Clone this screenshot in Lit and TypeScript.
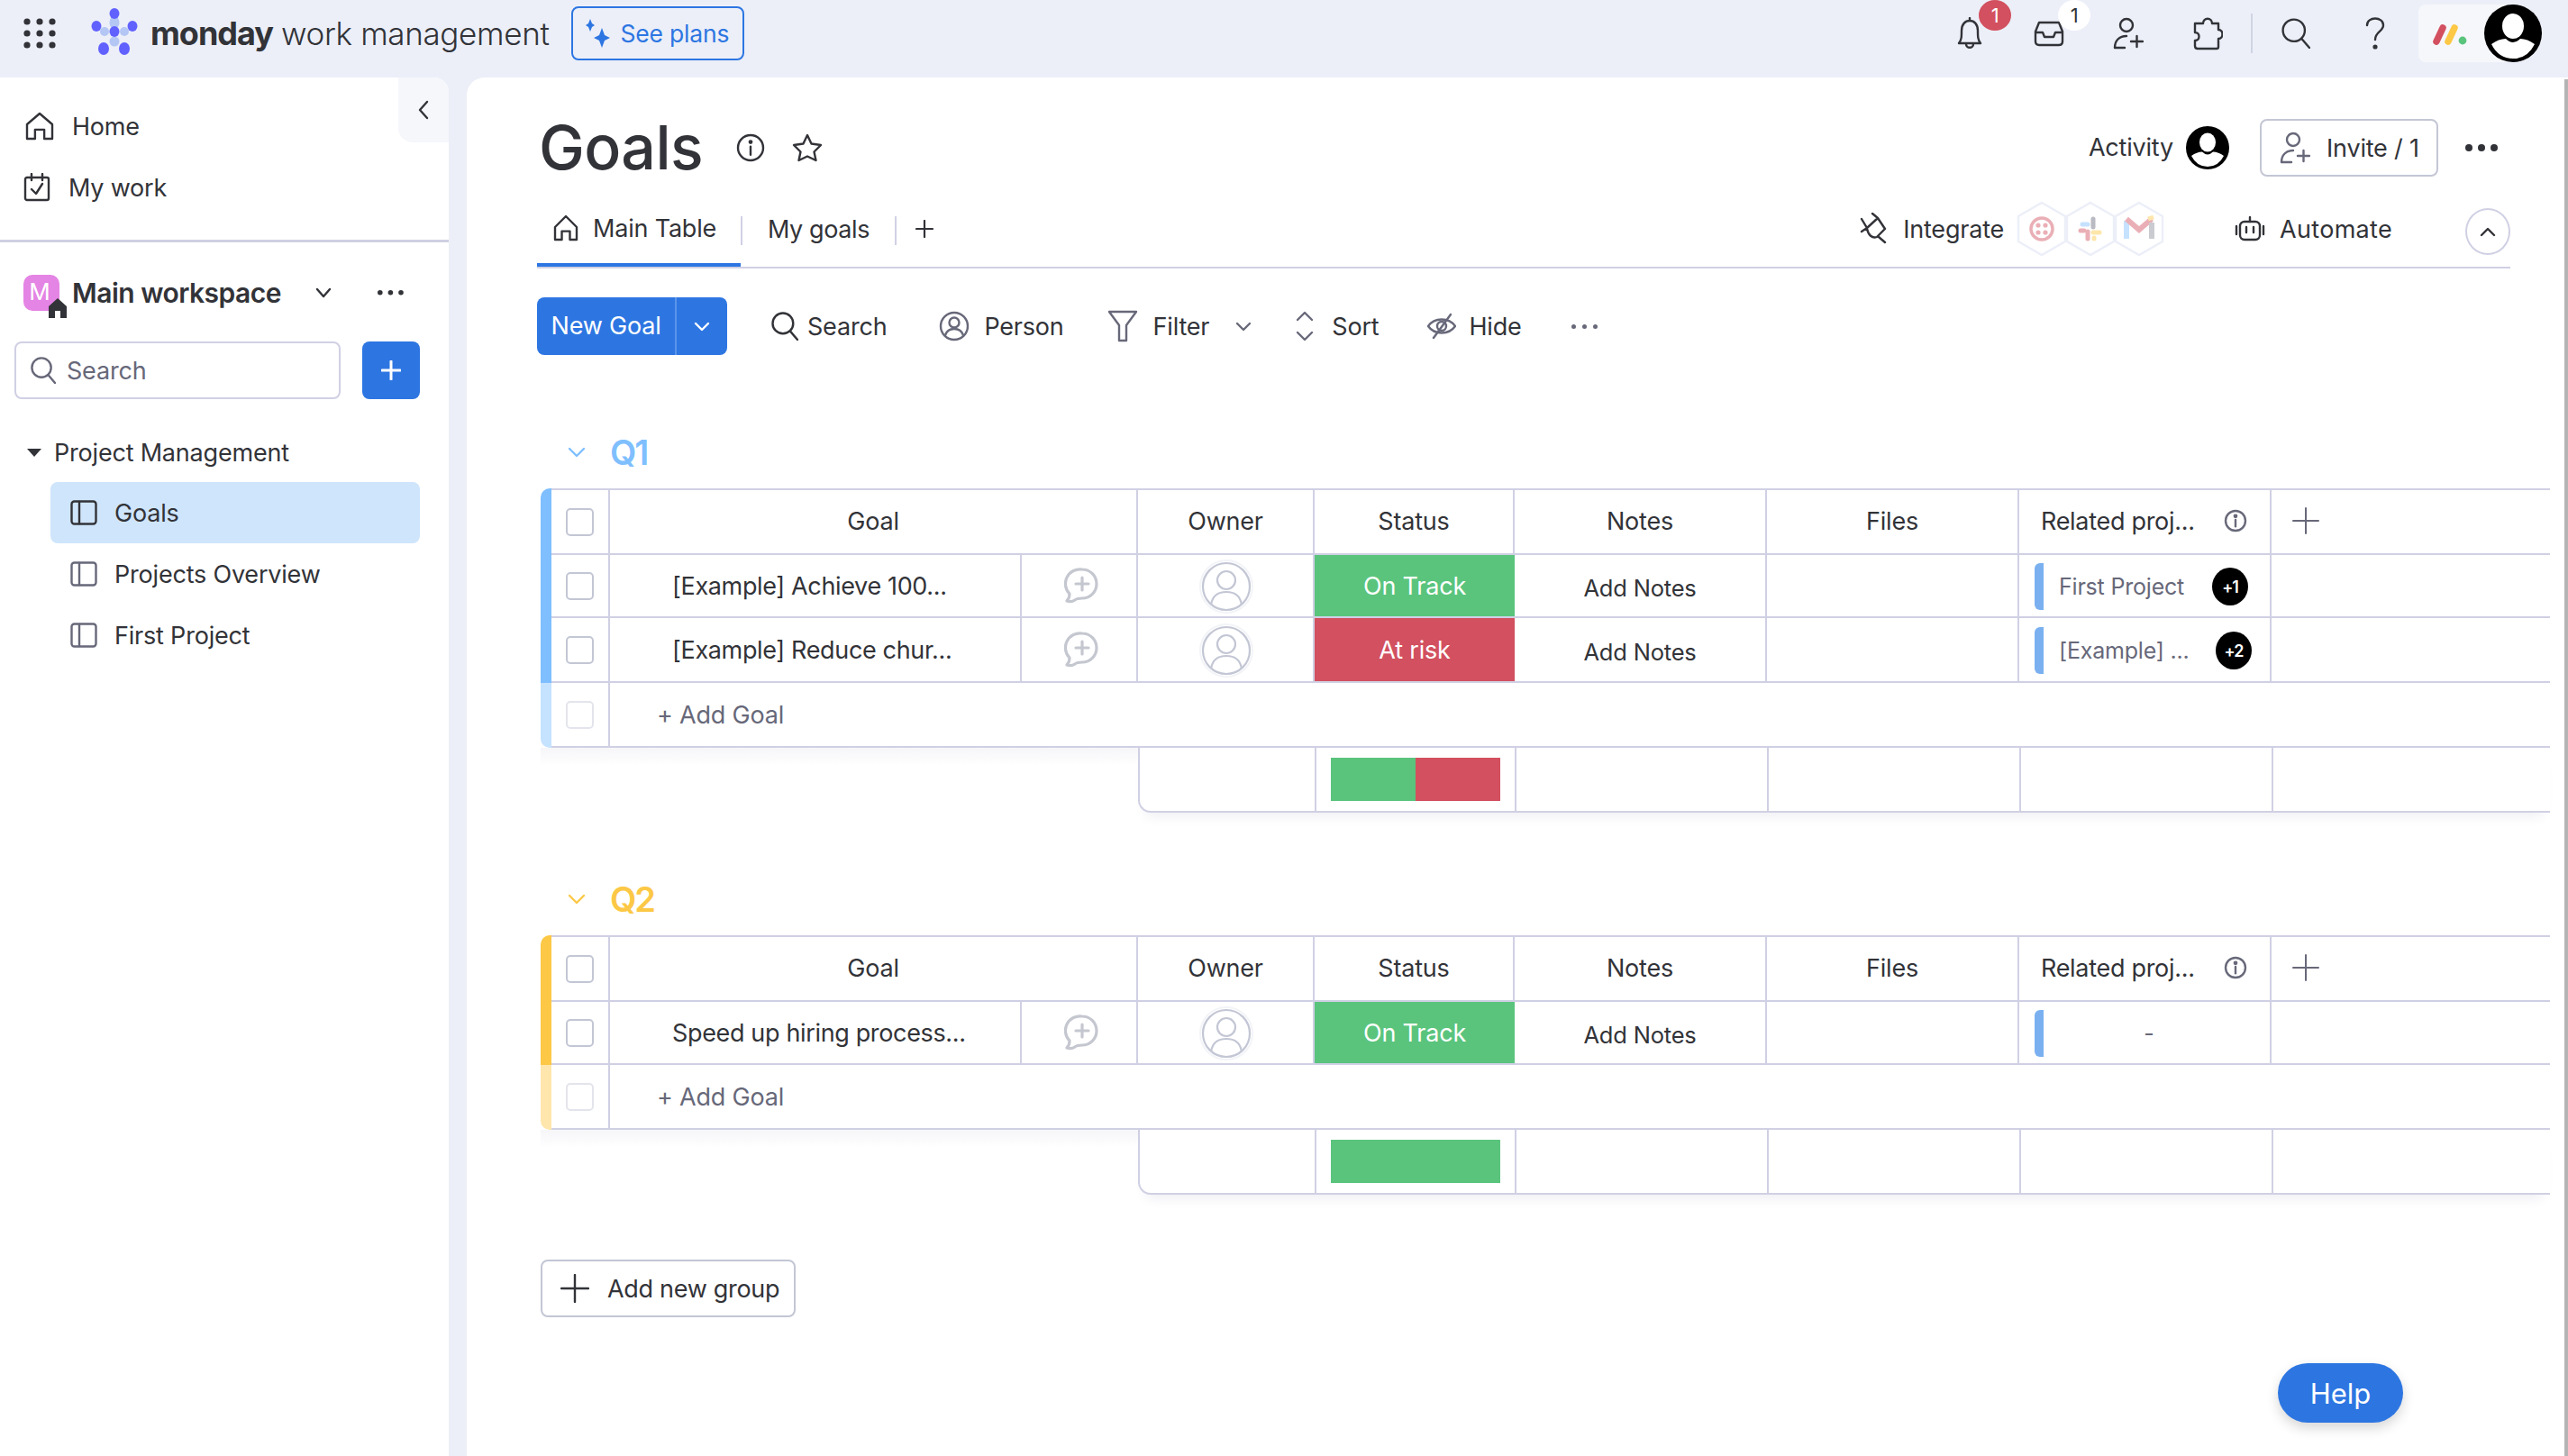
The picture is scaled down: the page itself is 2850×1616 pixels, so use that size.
import { LitElement, css, html, svg } from "lit";
import { customElement } from "lit/decorators.js";

// small stroked icon helper, viewBox is always 0 0 w h
const ico = (w: number, h: number, body: unknown, cls = "") =>
  html`<svg class="ico ${cls}" width=${w} height=${h} viewBox="0 0 ${w} ${h}" fill="none" stroke="currentColor" stroke-width="2.4" stroke-linecap="round" stroke-linejoin="round">${body}</svg>`;

const homeIcon = (w = 30, h = 32) =>
  ico(w, h, svg`<path d="M${w / 2} 2 L${w - 2} 14 V${h - 2} H${w * 0.66} V${h * 0.62} H${w * 0.34} V${h - 2} H2 V14 Z"/>`);
const searchIcon = (s = 30) =>
  ico(s, s + 2, svg`<circle cx=${s * 0.43} cy=${s * 0.43} r=${s * 0.38}/><path d="M${s * 0.7} ${s * 0.72} L${s - 1} ${s + 1}"/>`);
const chevron = (w = 18, h = 12, up = false) =>
  ico(w, h, up ? svg`<path d="M2 ${h - 2} L${w / 2} 2 L${w - 2} ${h - 2}"/>` : svg`<path d="M2 2 L${w / 2} ${h - 2} L${w - 2} 2"/>`);
const plus = (s = 24, sw = 2.4) =>
  html`<svg class="ico" width=${s} height=${s} viewBox="0 0 ${s} ${s}" stroke="currentColor" stroke-width=${sw} stroke-linecap="round"><path d="M${s / 2} 1 V${s - 1} M1 ${s / 2} H${s - 1}"/></svg>`;
const infoIcon = (s = 30) =>
  ico(s, s, svg`<circle cx=${s / 2} cy=${s / 2} r=${s / 2 - 2}/><path d="M${s / 2} ${s * 0.46} V${s * 0.74}"/><circle cx=${s / 2} cy=${s * 0.3} r="1.2" fill="currentColor"/>`);
const addPerson = () =>
  ico(34, 36, svg`<circle cx="15" cy="9" r="7"/><path d="M2 34 C2 26 7 21 15 21 M2 34 H13 M20 27 H33 M26.5 21 V33"/>`);
const dots = (size = 5, gap = 9) =>
  html`<svg class="ico" width=${size * 6 + gap * 2 - 6} height=${size * 2} viewBox="0 0 ${size * 6 + gap * 2 - 6} ${size * 2}" fill="currentColor">
    ${[0, 1, 2].map((i) => svg`<circle cx=${size + i * (size * 2 + gap - 3)} cy=${size} r=${size - 1}/>`)}
  </svg>`;
const panelIcon = () =>
  ico(30, 28, svg`<rect x="1.5" y="1.5" width="27" height="25" rx="3"/><path d="M10 2 V26"/>`);
const avatar = (s: number) =>
  html`<svg class="ico" width=${s} height=${s} viewBox="0 0 64 64">
    <circle cx="32" cy="32" r="32" fill="#000"/>
    <ellipse cx="32" cy="24" rx="12" ry="14" fill="#fff"/>
    <path d="M8 44 Q16 38 24 38 Q32 46 40 38 Q48 38 56 44 Q48 60 32 60 Q16 60 8 44Z" fill="#fff"/>
  </svg>`;
const ownerIcon = () =>
  html`<svg class="ico" width="60" height="60" viewBox="0 0 60 60" fill="none" stroke="#c3c6d4" stroke-width="2.2">
    <circle cx="30" cy="30" r="29" stroke="#f3f4f8" stroke-width="2"/>
    <circle cx="30" cy="30" r="26"/>
    <circle cx="30" cy="23" r="10"/>
    <path d="M13 50 C15 38 23 36 30 36 C37 36 45 38 47 50"/>
  </svg>`;
const commentIcon = () =>
  html`<svg class="ico" width="38" height="40" viewBox="0 0 38 40" fill="none" stroke="#c5c7d0" stroke-width="3.2" stroke-linecap="round" stroke-linejoin="round">
    <path d="M20 2 A16 16 0 0 1 20 34 C16 34 14 34 12 36 C9 38 6 38 3 37 C5 35 6 32 6 29 A16 16 0 0 1 20 2Z"/>
    <path d="M20 11 V25 M13 18 H27"/>
  </svg>`;

const logo = html`<svg class="ico" width="54" height="58" viewBox="0 0 54 58">
  <g fill="#b4c6f4"><ellipse cx="27" cy="17" rx="5.5" ry="7"/><ellipse cx="16" cy="27" rx="5" ry="5"/><ellipse cx="38" cy="27" rx="5" ry="5"/><ellipse cx="27" cy="38" rx="5.5" ry="5.5"/></g>
  <g fill="#6161ff"><ellipse cx="27" cy="7" rx="5.5" ry="6"/><ellipse cx="7" cy="21" rx="5.5" ry="6"/><ellipse cx="47" cy="21" rx="5.5" ry="6"/><ellipse cx="27" cy="27" rx="5.5" ry="6"/><ellipse cx="15" cy="46" rx="6" ry="7"/><ellipse cx="38" cy="46" rx="6" ry="7"/></g>
</svg>`;

const hex = (inner: unknown) =>
  html`<svg class="hex" width="56" height="62" viewBox="0 0 56 62" fill="none">
    <path d="M28 2 L54 17 V45 L28 60 L2 45 V17 Z" stroke="#eceff8" stroke-width="2.4" fill="#fff"/>
    <g opacity="0.45">${inner}</g>
  </svg>`;

interface Row {
  goal: string;
  status: "On Track" | "At risk";
  project: string;
  more: string;
  nameWidth: number;
}
interface Group {
  name: string;
  color: string;
  rows: Row[];
  bar: [string, number][];
}

const GREEN = "#5ac47d";
const RED = "#d2505f";

const groups: Group[] = [
  {
    name: "Q1",
    color: "#7fbfff",
    rows: [
      { goal: "[Example] Achieve 100...", status: "On Track", project: "First Project", more: "+1", nameWidth: 153 },
      { goal: "[Example] Reduce chur...", status: "At risk", project: "[Example] ...", more: "+2", nameWidth: 157 },
    ],
    bar: [[GREEN, 50], [RED, 50]],
  },
  {
    name: "Q2",
    color: "#fcc846",
    rows: [{ goal: "Speed up hiring process...", status: "On Track", project: "", more: "", nameWidth: 0 }],
    bar: [[GREEN, 100]],
  },
];

@customElement("app-root")
export class AppRoot extends LitElement {
  static styles = css`
    :host {
      display: block;
      position: relative;
      width: 2850px;
      height: 1616px;
      overflow: hidden;
      background: #eceff8;
      color: #323338;
      font-family: Inter, "Noto Sans", sans-serif;
      font-size: 27px;
      letter-spacing: -0.2px;
    }
    .ico { display: block; flex: none; }

    .top { display: flex; align-items: center; height: 86px; box-sizing: border-box; padding-bottom: 12px; }
    .apps { margin: 0 38px 0 26px; }
    .brand { margin-left: 13px; font-size: 35px; white-space: nowrap; font-weight: 300; letter-spacing: -0.35px; }
    .brand b { font-size: 36px; font-weight: 700; letter-spacing: -1px; margin-right: 9px; }
    .plans {
      display: flex; align-items: center; gap: 10px;
      margin-left: 25px; width: 192px; height: 60px; box-sizing: border-box; padding-left: 14px;
      border: 2px solid #2d76e2; border-radius: 8px; color: #2d76e2; font-size: 26.5px;
    }
    .top-right { display: flex; align-items: center; margin-left: auto; margin-right: 29px; }
    .slot { position: relative; width: 88px; height: 38px; display: flex; align-items: center; justify-content: center; }
    .badge {
      position: absolute; top: -18px; left: 54px; width: 36px; height: 34px; border-radius: 50%;
      background: #d2505f; color: #fff; font-size: 22px; display: flex; align-items: center; justify-content: center;
    }
    .badge.light { background: #fff; color: #323338; }
    .vsep { width: 2px; height: 44px; background: #d0d4e4; margin: 0 4px; }
    .apps-box {
      display: flex; align-items: center; height: 64px; width: 110px; margin-left: 4px; padding-left: 16px;
      box-sizing: border-box; background: #f6f7fb; border-radius: 8px;
    }
    .me { margin-left: -37px; position: relative; }

    .body { display: flex; gap: 20px; height: 1530px; }
    .side { width: 498px; background: #fff; border-top-right-radius: 16px; position: relative; }
    .side-tab {
      position: absolute; top: 0; right: 0; width: 56px; height: 72px; background: #f6f7fb;
      border-radius: 0 16px 0 16px; display: flex; align-items: center; justify-content: center;
    }
    .nav { display: flex; align-items: center; height: 68px; gap: 20px; padding-left: 28px; }
    .nav.cal { gap: 20px; padding-left: 26px; }
    .nav-wrap { padding: 20px 0 24px; border-bottom: 3px solid #d0d0e4; }
    .ws { display: flex; align-items: center; margin: 34px 0 32px 26px; height: 44px; }
    .ws-ico {
      position: relative; width: 40px; height: 40px; border-radius: 10px; background: #e484e4; color: #fff;
      font-size: 26px; display: flex; align-items: center; justify-content: center; margin-right: 14px; box-sizing: border-box; padding: 0 4px 4px 0;
    }
    .ws-ico svg { position: absolute; right: -8px; bottom: -8px; }
    .ws-name { font-weight: 600; font-size: 30px; letter-spacing: -0.5px; width: 270px; }
    .ws-dots { margin-left: 50px; }
    .find { display: flex; gap: 24px; margin-left: 16px; }
    .find-box {
      display: flex; align-items: center; gap: 12px; width: 362px; height: 64px; box-sizing: border-box;
      padding-left: 16px; border: 2px solid #d0d0e4; border-radius: 8px; color: #676879;
    }
    .find-add {
      width: 64px; height: 64px; border-radius: 8px; background: #2d76e2; color: #fff;
      display: flex; align-items: center; justify-content: center;
    }
    .folder { display: flex; align-items: center; gap: 14px; height: 38px; margin: 40px 0 14px 30px; }
    .tri { width: 0; height: 0; border: 8px solid transparent; border-top: 9px solid #323338; border-bottom: 0; }
    .item {
      display: flex; align-items: center; gap: 19px; height: 68px; margin-left: 56px; width: 410px;
      padding-left: 22px; box-sizing: border-box; border-radius: 8px; color: #323338;
    }
    .item svg { color: #676879; }
    .item.on { background: #cfe5fc; }
    .item.on svg { color: #323338; }

    .main {
      flex: 1; background: #fff; border-top-left-radius: 20px; padding: 46px 20px 0 78px; box-sizing: border-box;
    }
    .head { display: flex; align-items: center; height: 64px; width: 2190px; }
    h1 { margin: -2px 37px 0 2px; font-size: 68px; font-weight: 500; letter-spacing: -0.6px; line-height: 64px; }
    .head .star { margin-left: 30px; }
    .head-right { display: flex; align-items: center; margin-left: auto; }
    .activity { margin-right: 14px; padding-bottom: 2px; }
    .invite {
      display: flex; align-items: center; gap: 18px; width: 198px; height: 64px; box-sizing: border-box; padding-left: 20px;
      margin-left: 34px; border: 2px solid #c3c6d4; border-radius: 8px;
    }
    .invite svg { color: #676879; }
    .head-dots { margin: 0 13px 0 29px; }

    .tabs { display: flex; align-items: stretch; height: 76px; width: 2190px; margin-top: 26px; border-bottom: 2px solid #d0d0e4; box-sizing: border-box; }
    .tab { display: flex; align-items: center; gap: 16px; height: 74px; box-sizing: border-box; padding: 0 20px 8px 18px; width: 226px; border-bottom: 4px solid #2d76e2; white-space: nowrap; }
    .tsep { width: 2px; height: 32px; background: #d0d0e4; margin: 18px 0 0; }
    .tab2 { display: flex; align-items: center; height: 64px; padding: 0 28px 0 28px; white-space: nowrap; letter-spacing: -0.4px; }
    .tplus { display: flex; align-items: center; height: 64px; padding-left: 21px; }
    .tabs-right { display: flex; align-items: center; margin-left: auto; height: 64px; }
    .integrate { margin-left: 16px; margin-right: 14px; }
    .hexes { display: flex; }
    .hexes .hex + .hex { margin-left: -2px; }
    .robot { margin-left: 78px; }
    .automate { margin: 0 81px 0 16px; letter-spacing: 0.3px; }
    .collapse {
      width: 50px; height: 52px; box-sizing: border-box; border: 2px solid #d0d0e4; border-radius: 50%;
      display: flex; align-items: center; justify-content: center; margin-top: 6px;
    }

    .toolbar { display: flex; align-items: center; height: 64px; margin-top: 32px; }
    .newbtn { display: flex; height: 64px; width: 211px; background: #2d76e2; color: #fff; border-radius: 8px; margin-right: 49px; }
    .newbtn .label { width: 155px; display: flex; align-items: center; justify-content: center; border-right: 2px solid #5a94ea; box-sizing: border-box; padding-bottom: 2px; }
    .newbtn .drop { flex: 1; display: flex; align-items: center; justify-content: center; }
    .tool { display: flex; align-items: center; gap: 10px; }
    .tool svg { color: #323338; }
    .tool.grey svg { color: #676879; }
    .tool.person { margin-left: 58px; gap: 16px; }
    .tool.filter { margin-left: 48px; gap: 17px; }
    .tool.filter span { margin-left: 12px; }
    .tool.sort { margin-left: 49px; gap: 20px; }
    .tool.hide { margin-left: 54px; gap: 14px; }
    .more-tools { margin-left: 54px; color: #676879; }

    .groups { margin: 88px 0 0 4px; }
    .group { width: 2230px; margin-bottom: 76px; }
    .g-title { display: flex; align-items: center; height: 40px; margin-bottom: 20px; padding-left: 30px; gap: 27px; font-size: 38px; font-weight: 600; letter-spacing: -2px; }
    .tbl { display: flex; }
    .strip { width: 12px; display: flex; flex-direction: column; flex: none; }
    .strip .solid { flex: 1; border-top-left-radius: 10px; }
    .strip .fade { height: 72px; opacity: 0.45; border-bottom-left-radius: 10px; }
    .rows { flex: 1; border-top: 2px solid #d0d0e4; }
    .row {
      display: grid; grid-template-columns: 65px 457px 129px 196px 222px 280px 280px 280px 309px;
      height: 72px; box-sizing: border-box; border-bottom: 2px solid #d0d0e4;
    }
    .row.first { height: 70px; }
    .cell { border-right: 2px solid #d0d0e4; display: flex; align-items: center; justify-content: center; box-sizing: border-box; min-width: 0; }
    .cell:last-child { border-right: 0; justify-content: flex-start; }
    .row.hd .cell { padding-bottom: 2px; }
    .row.hd .cell:first-child { padding-bottom: 0; }
    .span2 { grid-column: span 2; }
    .box { width: 31px; height: 31px; box-sizing: border-box; border: 2px solid #c3c6d4; border-radius: 5px; }
    .goal { justify-content: flex-start; padding-left: 69px; white-space: nowrap; letter-spacing: -0.35px; }
    .comment { padding-left: 4px; }
    .owner { padding: 2px 0 0 1px; }
    .status { color: #fff; border-right: 0; }
    .notes { font-size: 25.5px; padding-top: 4px; }
    .row.hd .hrel { justify-content: flex-start; padding-left: 24px; gap: 32px; white-space: nowrap; letter-spacing: -0.3px; }
    .hrel svg { color: #676879; }
    .hplus { padding-left: 23px; color: #676879; }
    .rel { justify-content: flex-start; padding: 2px 0 0 17px; gap: 17px; white-space: nowrap; color: #676879; font-size: 25px; }
    .pill { width: 10px; height: 52px; background: #7ab0f0; border-radius: 6px 0 0 6px; flex: none; }
    .more {
      width: 40px; height: 42px; border-radius: 50%; background: #000; color: #fff; font-size: 18px; font-weight: 600;
      display: flex; align-items: center; justify-content: center; flex: none; letter-spacing: -1px;
    }
    .none { flex: 1; text-align: center; padding-right: 34px; }

    .addrow { display: grid; grid-template-columns: 65px 1fr; height: 72px; box-sizing: border-box; border-bottom: 2px solid #d0d0e4; }
    .addrow .cell:first-child { border-right: 2px solid #d0d0e4; }
    .addrow .box { opacity: 0.45; }
    .addgoal { justify-content: flex-start; padding-left: 52px; color: #676879; }
    .shadow { height: 20px; margin-bottom: -20px; width: 663px; background: linear-gradient(#f6f6f9, #fff); }
    .sum {
      display: grid; grid-template-columns: 196px 222px 280px 280px 280px 309px; margin-left: 663px;
      height: 72px; box-sizing: border-box; border-bottom: 2px solid #d0d0e4; border-left: 2px solid #d0d0e4; border-bottom-left-radius: 14px;
      box-shadow: 0 12px 14px -8px #eeeef3; position: relative;
    }
    .sum > div { border-right: 2px solid #d0d0e4; box-sizing: border-box; }
    .sum > div:first-child { margin-left: -2px; }
    .sum > div:last-child { border-right: 0; }
    .sum .barcell { display: flex; align-items: center; justify-content: center; }
    .bar { display: flex; width: 188px; height: 48px; }

    .addgroup {
      display: flex; align-items: center; gap: 20px; width: 283px; height: 64px; box-sizing: border-box; padding-left: 20px;
      margin-top: -4px; border: 2px solid #c3c6d4; border-radius: 8px; white-space: nowrap; letter-spacing: -0.3px;
    }

    .help {
      position: absolute; left: 2528px; top: 1513px; width: 139px; height: 66px; border-radius: 33px;
      background: #2d76e2; color: #fff; font-size: 31px; display: flex; align-items: center; justify-content: center;
      box-shadow: 0 6px 14px rgba(0, 0, 0, 0.16); letter-spacing: 0;
    }
    .scroll { position: absolute; right: 0; top: 88px; width: 4px; height: 1528px; background: #b4b4b4; }
  `;

  private renderGroup(g: Group) {
    return html`
      <section class="group">
        <div class="g-title" style="color:${g.color}">${chevron(20, 12)}<span>${g.name}</span></div>
        <div class="tbl">
          <div class="strip">
            <span class="solid" style="background:${g.color}"></span>
            <span class="fade" style="background:${g.color}"></span>
          </div>
          <div class="rows">
            <div class="row hd">
              <div class="cell"><span class="box"></span></div>
              <div class="cell span2">Goal</div>
              <div class="cell">Owner</div>
              <div class="cell">Status</div>
              <div class="cell">Notes</div>
              <div class="cell">Files</div>
              <div class="cell hrel">Related proj... ${infoIcon(26)}</div>
              <div class="cell hplus">${plus(30, 2)}</div>
            </div>
            ${g.rows.map(
              (r, i) => html`
                <div class="row ${i === 0 ? "first" : ""}">
                  <div class="cell"><span class="box"></span></div>
                  <div class="cell goal">${r.goal}</div>
                  <div class="cell comment">${commentIcon()}</div>
                  <div class="cell owner">${ownerIcon()}</div>
                  <div class="cell status" style="background:${r.status === "On Track" ? GREEN : RED}">${r.status}</div>
                  <div class="cell notes">Add Notes</div>
                  <div class="cell"></div>
                  <div class="cell rel">
                    <span class="pill"></span>
                    ${r.project
                      ? html`<span style="width:${r.nameWidth}px">${r.project}</span><span class="more">${r.more}</span>`
                      : html`<span class="none">-</span>`}
                  </div>
                  <div class="cell"></div>
                </div>
              `
            )}
            <div class="addrow">
              <div class="cell"><span class="box"></span></div>
              <div class="cell addgoal">+ Add Goal</div>
            </div>
          </div>
        </div>
        <div class="shadow"></div>
        <div class="sum">
          <div></div>
          <div class="barcell">
            <div class="bar">
              ${g.bar.map(([c, w]) => html`<span style="background:${c};width:${w}%"></span>`)}
            </div>
          </div>
          <div></div>
          <div></div>
          <div></div>
          <div></div>
        </div>
      </section>
    `;
  }

  render() {
    return html`
      <header class="top">
        <svg class="ico apps" width="36" height="34" viewBox="0 0 36 34" fill="#323338">
          ${[4, 18, 32].flatMap((x) => [4, 17, 30].map((y) => svg`<circle cx=${x} cy=${y} r="3.6"/>`))}
        </svg>
        ${logo}
        <div class="brand"><b>monday</b>work management</div>
        <div class="plans">
          <svg class="ico" width="28" height="34" viewBox="0 0 28 34" fill="#2d76e2">
            <path d="M5 1 L7 6 L10 8 L7 10 L5 15 L3 10 L0 8 L3 6Z"/>
            <path d="M18 11 L21 19 L27 22 L21 25 L18 33 L15 25 L9 22 L15 19Z"/>
          </svg>
          See plans
        </div>
        <div class="top-right">
          <div class="slot">
            ${ico(30, 36, svg`<path d="M3 29 C6 25 6 22 6 15 C6 8 10 4 15 4 C20 4 24 8 24 15 C24 22 24 25 27 29 Z M15 1 V4 M11 30 C11 35 19 35 19 30" />`)}
            <span class="badge">1</span>
          </div>
          <div class="slot">
            ${ico(34, 30, svg`<path d="M2 13 L6 3 H28 L32 13 V24 Q32 28 28 28 H6 Q2 28 2 24 Z M2 14 H10 L12 19 H22 L24 14 H32"/>`)}
            <span class="badge light">1</span>
          </div>
          <div class="slot">${addPerson()}</div>
          <div class="slot">
            ${ico(34, 38, svg`<path d="M12 8 C12 1 22 1 22 8 H29 V15 C35 15 35 25 29 25 V34 Q29 36 27 36 H6 Q3 36 3 33 V27 C9 27 9 18 3 18 V8Z"/>`)}
          </div>
          <span class="vsep"></span>
          <div class="slot">${searchIcon(32)}</div>
          <div class="slot">
            ${ico(22, 36, svg`<path d="M2 9 C2 -1 20 -1 20 9 C20 16 11 16 11 25"/><circle cx="11" cy="33" r="1.4" fill="currentColor"/>`)}
          </div>
          <div class="apps-box">
            <svg class="ico" width="40" height="30" viewBox="0 0 40 30">
              <path d="M4 24 L11 9" stroke="#d2505f" stroke-width="7.5" stroke-linecap="round"/>
              <path d="M17 24 L24 9" stroke="#fcc846" stroke-width="7.5" stroke-linecap="round"/>
              <circle cx="33" cy="23" r="4.4" fill="#5ac47d"/>
            </svg>
          </div>
          <div class="me">${avatar(64)}</div>
        </div>
      </header>

      <div class="body">
        <aside class="side">
          <div class="side-tab">${ico(12, 22, svg`<path d="M10 2 L2 11 L10 20"/>`)}</div>
          <div class="nav-wrap">
            <div class="nav">${homeIcon(32, 32)}Home</div>
            <div class="nav cal">
              ${ico(30, 32, svg`<rect x="2" y="5" width="26" height="25" rx="2"/><path d="M9 1 V8 M21 1 V8 M9 18 L14 23 L21 12"/>`)}My work
            </div>
          </div>
          <div class="ws">
            <div class="ws-ico">M
              <svg width="20" height="22" viewBox="0 0 20 22" fill="#323338"><path d="M10 0 L20 9 V22 H13 V14 H7 V22 H0 V9 Z"/></svg>
            </div>
            <div class="ws-name">Main workspace</div>
            ${chevron(18, 12)}
            <span class="ws-dots">${dots(3.8, 7)}</span>
          </div>
          <div class="find">
            <div class="find-box">${searchIcon(28)}Search</div>
            <div class="find-add">${plus(22, 3)}</div>
          </div>
          <div class="folder"><span class="tri"></span>Project Management</div>
          <div class="item on">${panelIcon()}Goals</div>
          <div class="item">${panelIcon()}Projects Overview</div>
          <div class="item">${panelIcon()}First Project</div>
        </aside>

        <main class="main">
          <div class="head">
            <h1>Goals</h1>
            ${infoIcon(32)}
            <span class="star">
              ${ico(34, 32, svg`<path d="M17 2 L21.5 11.5 L32 13 L24.5 20.5 L26.5 30 L17 25.5 L7.5 30 L9.5 20.5 L2 13 L12.5 11.5 Z"/>`)}
            </span>
            <div class="head-right">
              <span class="activity">Activity</span>
              ${avatar(48)}
              <div class="invite">${addPerson()}Invite / 1</div>
              <span class="head-dots">${dots(5, 7)}</span>
            </div>
          </div>

          <div class="tabs">
            <div class="tab">${homeIcon(28, 30)}Main Table</div>
            <span class="tsep"></span>
            <div class="tab2">My goals</div>
            <span class="tsep"></span>
            <div class="tplus">${plus(20, 2.2)}</div>
            <div class="tabs-right">
              ${ico(32, 36, svg`<path d="M8 18 L20 7 L28 19 L19 28 C14 30 9 26 8 18Z M2 8 L8 18 M14 2 L20 7 M2 22 L8 18 M21 28 L28 34" transform="translate(0 -1)"/>`)}
              <span class="integrate">Integrate</span>
              <div class="hexes">
                ${hex(svg`<circle cx="28" cy="31" r="12" stroke="#d2505f" stroke-width="3.5"/><g fill="#d2505f"><circle cx="24" cy="27" r="2.6"/><circle cx="32" cy="27" r="2.6"/><circle cx="24" cy="35" r="2.6"/><circle cx="32" cy="35" r="2.6"/></g>`)}
                ${hex(svg`<g stroke-width="5" stroke-linecap="round"><path d="M19 26 H25" stroke="#7fbfff"/><path d="M31 20 V29" stroke="#676879"/><path d="M31 35 H38" stroke="#fcc846"/><path d="M25 34 V42" stroke="#d2505f"/><path d="M17 33 H21" stroke="#d2505f"/><path d="M32 41 V42" stroke="#fcc846"/></g>`)}
                ${hex(svg`<path d="M14 22 V42" stroke="#7fbfff" stroke-width="6"/><path d="M14 20 L28 32 L42 20" stroke="#d2505f" stroke-width="6"/><path d="M42 24 V42" stroke="#8b8d99" stroke-width="6"/><path d="M38 20 L44 18" stroke="#fcc846" stroke-width="5"/>`)}
              </div>
              <span class="robot">
                ${ico(34, 28, svg`<rect x="6" y="6" width="22" height="20" rx="5"/><path d="M17 1 V6 M2 11 V20 M32 11 V20 M13 12 V18 M21 12 V18"/>`)}
              </span>
              <span class="automate">Automate</span>
              <div class="collapse">${chevron(18, 11, true)}</div>
            </div>
          </div>

          <div class="toolbar">
            <div class="newbtn">
              <div class="label">New Goal</div>
              <div class="drop">${chevron(18, 11)}</div>
            </div>
            <div class="tool">${searchIcon(30)}Search</div>
            <div class="tool grey person">
              ${ico(34, 34, svg`<circle cx="17" cy="17" r="15"/><circle cx="17" cy="13" r="5.5"/><path d="M7 27 C9 21 13 20 17 20 C21 20 25 21 27 27"/>`)}Person
            </div>
            <div class="tool grey filter">
              ${ico(34, 36, svg`<path d="M2 2 H32 L21 17 V34 H13 V17 Z"/>`)}Filter
              <span>${chevron(18, 11)}</span>
            </div>
            <div class="tool grey sort">
              ${ico(20, 34, svg`<path d="M2 10 L10 2 L18 10 M2 24 L10 32 L18 24"/>`)}Sort
            </div>
            <div class="tool grey hide">
              ${ico(32, 30, svg`<path d="M1 15 C8 5 24 5 31 15 C24 25 8 25 1 15Z"/><circle cx="16" cy="15" r="5"/><path d="M26 2 L7 28"/>`)}Hide
            </div>
            <span class="more-tools">${dots(3.5, 8)}</span>
          </div>

          <div class="groups">
            ${groups.map((g) => this.renderGroup(g))}
            <div class="addgroup">${plus(32, 2.4)}Add new group</div>
          </div>
        </main>
      </div>

      <div class="help">Help</div>
      <div class="scroll"></div>
    `;
  }
}
